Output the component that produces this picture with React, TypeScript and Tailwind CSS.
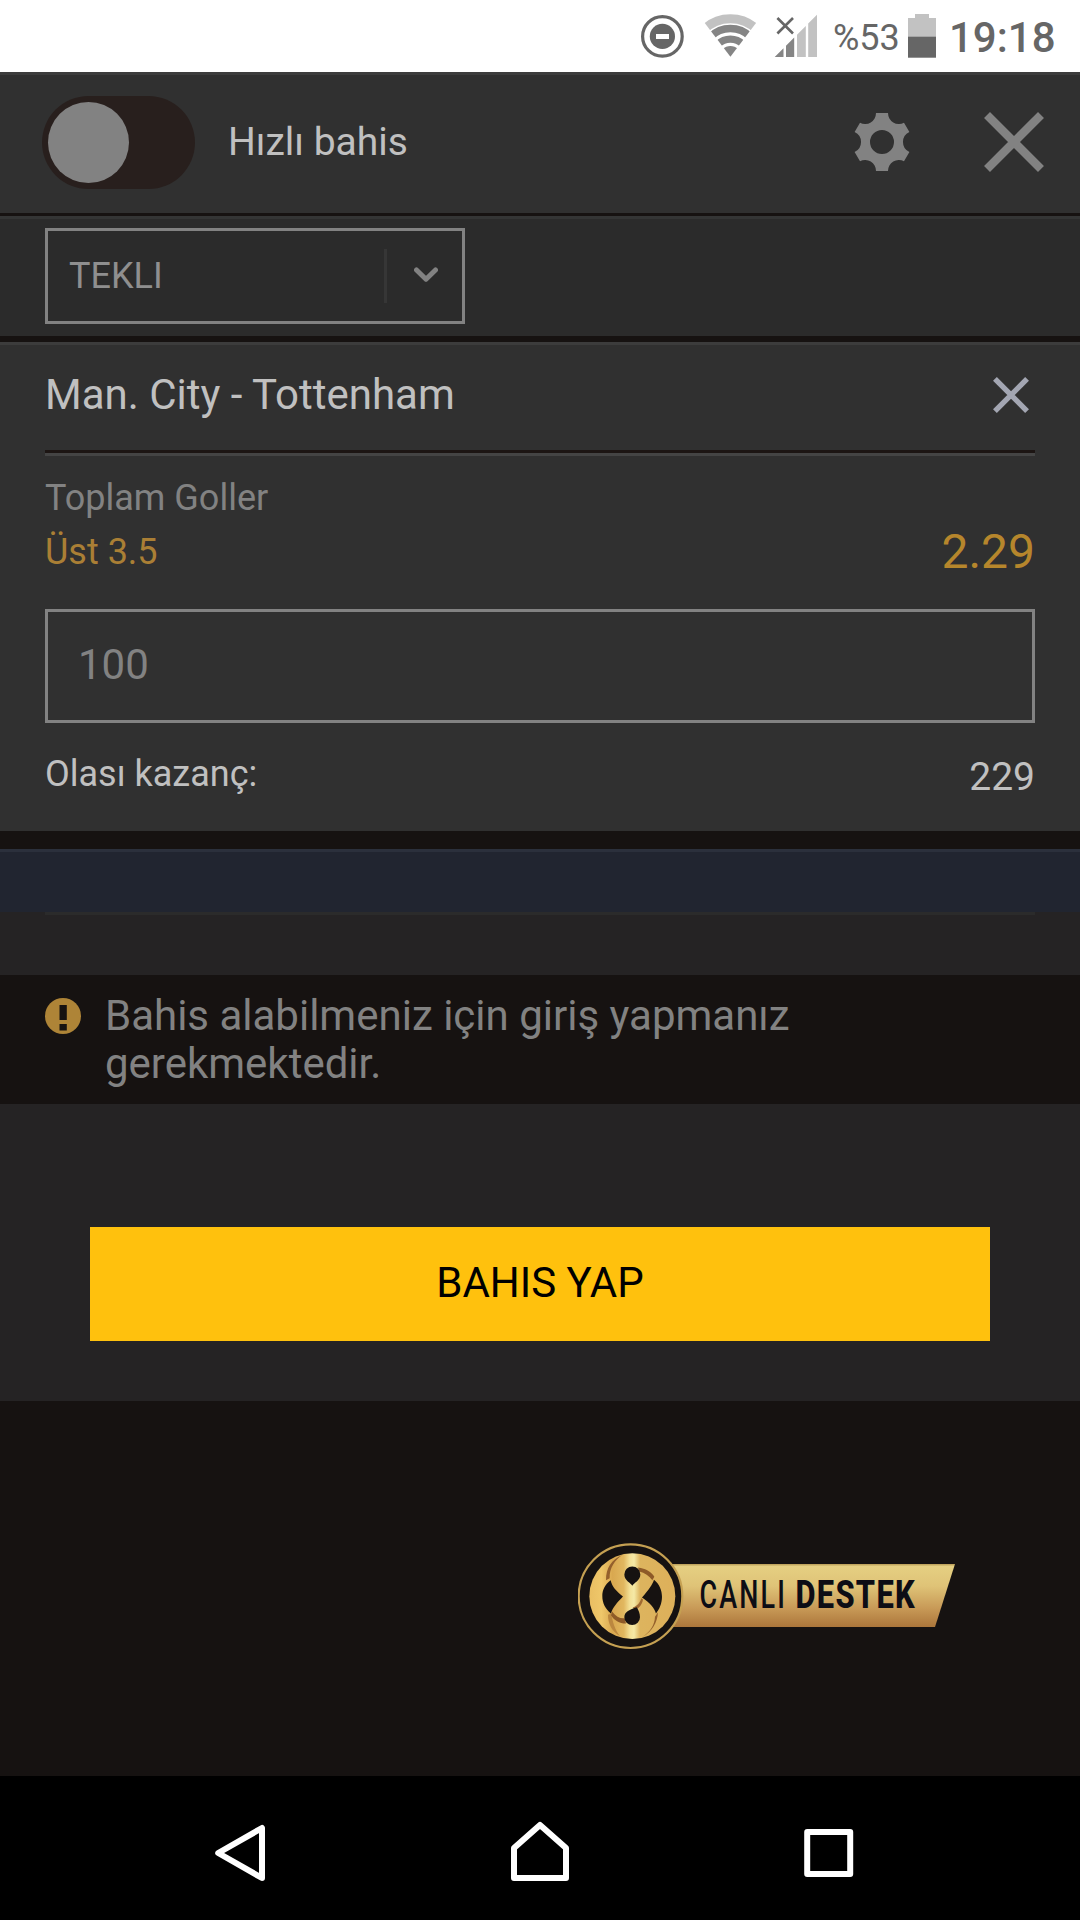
import { useState } from "react";

interface Bet {
  match: string;
  market: string;
  pick: string;
  odds: number;
}

const bet: Bet = {
  match: "Man. City - Tottenham",
  market: "Toplam Goller",
  pick: "Üst 3.5",
  odds: 2.29,
};

function DndIcon() {
  return (
    <svg width="44" height="44" viewBox="0 0 44 44">
      <circle cx="22.4" cy="22.4" r="19.8" fill="none" stroke="#666666" strokeWidth="3.2" />
      <circle cx="22.4" cy="22.4" r="12.6" fill="#666666" />
      <rect x="16" y="20" width="13" height="5" fill="#ffffff" />
    </svg>
  );
}

function WifiIcon() {
  return (
    <svg width="54" height="44" viewBox="0 0 54 44">
      <defs>
        <clipPath id="fan">
          <polygon points="27.4,42.7 -11.8,-8.8 66.6,-8.8" />
        </clipPath>
      </defs>
      <g clipPath="url(#fan)" fill="none">
        <circle cx="27.4" cy="42.7" r="38" stroke="#c2c2c2" strokeWidth="9" />
        <circle cx="27.4" cy="42.7" r="28.2" stroke="#858585" strokeWidth="7.4" />
        <circle cx="27.4" cy="42.7" r="17.6" stroke="#858585" strokeWidth="7.4" />
        <circle cx="27.4" cy="42.7" r="10.8" fill="#858585" />
      </g>
    </svg>
  );
}

function SignalIcon() {
  return (
    <svg width="44" height="44" viewBox="0 0 44 44">
      <path d="M.7 43 9.5 34.2V43Z M12 43V31.7L20.2 23.5V43Z" fill="#858585" />
      <path d="M23 43V20.7L31.8 11.9V43Z M34.2 43V9.5L43 .7V43Z" fill="#c2c2c2" />
      <path d="M3.4 4 19 19.5M19 4 3.4 19.5" stroke="#666666" strokeWidth="2.6" />
    </svg>
  );
}

function BatteryIcon() {
  return (
    <svg width="28" height="44" viewBox="0 0 28 44">
      <path d="M7 0H21V4H28V23H0V4H7Z" fill="#c2c2c2" />
      <rect y="22.7" width="28" height="21" fill="#666666" />
    </svg>
  );
}

function StatusBar() {
  return (
    <div className="flex h-[72px] items-center bg-white pr-6 text-[#666666]">
      <div className="mr-[19px] ml-auto"><DndIcon /></div>
      <div className="mr-[17px]"><WifiIcon /></div>
      <div className="mr-[15px]"><SignalIcon /></div>
      <span className="mr-2 w-[67px] pt-[3px] text-[36px]">%53</span>
      <div className="mr-[13px] pb-px"><BatteryIcon /></div>
      <span className="w-[107px] pt-[4px] text-[42px] font-medium">19:18</span>
    </div>
  );
}

function GearIcon() {
  return (
    <svg width="60" height="60" viewBox="-30 -30 60 60">
      <path
        fillRule="evenodd"
        fill="#828282"
        d="M-6-29H6A11 11 0 0 0 22-19.2L27.4-10A11 11 0 0 0 27.4 10L22 19.2A11 11 0 0 0 6 29H-6A11 11 0 0 0-22 19.2L-27.4 10A11 11 0 0 0-27.4-10L-22-19.2A11 11 0 0 0-6-29ZM0-12A12 12 0 1 0 0 12A12 12 0 1 0 0-12Z"
      />
    </svg>
  );
}

function CloseIcon({ size, color, stroke }: { size: number; color: string; stroke: number }) {
  const a = stroke * 0.36;
  const b = size - a;
  return (
    <svg width={size} height={size} viewBox={`0 0 ${size} ${size}`}>
      <path d={`M${a} ${a}L${b} ${b}M${b} ${a}L${a} ${b}`} stroke={color} strokeWidth={stroke} />
    </svg>
  );
}

function SupportBadge() {
  return (
    <svg className="block" width="380" height="108" viewBox="0 0 380 108">
      <defs>
        <linearGradient id="band" x1="0" y1="0" x2="0" y2="1">
          <stop offset="0" stopColor="#b79a55" />
          <stop offset=".04" stopColor="#e5cf82" />
          <stop offset=".35" stopColor="#dfc377" />
          <stop offset=".7" stopColor="#c89a57" />
          <stop offset="1" stopColor="#ac763b" />
        </linearGradient>
        <linearGradient id="gold" gradientUnits="userSpaceOnUse" x1="58" y1="0" x2="316" y2="0">
          <stop offset="0" stopColor="#e9be62" />
          <stop offset=".14" stopColor="#efc76a" />
          <stop offset=".27" stopColor="#d9a850" />
          <stop offset=".4" stopColor="#e1b75f" />
          <stop offset=".47" stopColor="#f3e096" />
          <stop offset=".52" stopColor="#f5e9a6" />
          <stop offset=".59" stopColor="#ddb45e" />
          <stop offset="1" stopColor="#ddb05a" />
        </linearGradient>
      </defs>
      <polygon points="80,21 377,21 357,84 80,84" fill="url(#band)" />
      <circle cx="52.5" cy="53.2" r="51.8" fill="#161211" stroke="#c5a052" strokeWidth="2.2" />
      {/* Interlaced ribbon emblem */}
      <g transform="translate(-8 -8.2) scale(.3333)">
        <circle cx="187" cy="184" r="129" fill="url(#gold)" />
        <path d="M158 60C124 74 108 100 108 136L119 130C118 100 134 76 158 60Z" fill="#94602c" />
        <path d="M218 306C246 290 262 264 264 232L255 246C254 270 242 290 218 306Z" fill="#94602c" />
        <path d="M114 240C114 268 126 290 150 304C134 284 128 262 124 236Z" fill="#bb873f" />
        <path d="M122 136C104 149 97 166 97 184C97 204 106 222 123 236C128 217 142 203 159 185C138 168 126 155 122 136Z" fill="#161211" />
        <path d="M252 135C268 148 276 167 276 186C276 206 268 224 258 236C254 219 240 205 216 188C237 165 247 150 252 135Z" fill="#161211" />
        <path d="M204 98C227 101 245 111 253 126L247 136C238 124 224 114 208 110Z" fill="#8e5a28" />
        <path d="M126 230C138 246 152 252 164 250L168 266C148 266 132 256 123 241Z" fill="#8e5a28" />
        <path d="M214 190C210 204 200 214 188 218L196 226C208 219 217 208 219 194Z" fill="#a06a31" />
        <path d="M187 153C183 144 163 138 163 119A24 24 0 0 1 211 119C211 138 191 144 187 153Z" fill="#161211" />
        <path d="M200 217C206 226 210 236 210 247A23.5 23.5 0 1 1 163 247C163 230 180 224 200 217Z" fill="#161211" />
      </g>
      <g fill="#0d0d15" fontFamily="Roboto, sans-serif" fontSize="38.5">
        <text transform="translate(121.5 64.8) scale(.7 1)" textLength="122" fontWeight="500">CANLI</text>
        <text transform="translate(217.5 64.8) scale(.8 1)" textLength="149" fontWeight="800">DESTEK</text>
      </g>
    </svg>
  );
}

function NavBar() {
  return (
    <div className="flex h-36 items-center bg-black pt-1.5 pl-[214px]">
      <svg className="mr-[246px]" width="51" height="62" viewBox="0 0 51 62" fill="none" stroke="#ffffff" strokeWidth="6" strokeLinejoin="round">
        <path d="M48 8V58L4.2 33Z" />
      </svg>
      <svg className="mr-[235px]" width="58" height="62" viewBox="0 0 58 62" fill="none" stroke="#ffffff" strokeWidth="6" strokeLinejoin="round">
        <path d="M29 5 55 28V58H3V28Z" />
      </svg>
      <svg width="50" height="62" viewBox="0 0 50 62" fill="none" stroke="#ffffff" strokeWidth="6" strokeLinejoin="round">
        <path d="M3.2 12H46.2V54H3.2Z" />
      </svg>
    </div>
  );
}

export default function App() {
  const [quickBet, setQuickBet] = useState(false);
  const [stake, setStake] = useState("100");

  const winnings = Math.round(Number(stake) * bet.odds);

  return (
    <div className="flex h-[1920px] w-[1080px] flex-col overflow-hidden bg-[#161211] font-['Roboto',sans-serif] leading-none">
      <StatusBar />

      {/* Header */}
      <header className="flex h-[141px] items-center border-t-[3px] border-[#3c3c3c] bg-[#303030] pr-9 pb-[3px] pl-[42px]">
        <button
          onClick={() => setQuickBet((prev) => !prev)}
          className={`flex h-[93px] w-[153px] items-center rounded-full bg-[#281f1d] px-1.5 ${quickBet ? "justify-end" : ""}`}
        >
          <span className="size-[81px] rounded-full bg-[#828282]" />
        </button>
        <span className="ml-[33px] text-[39px] text-[#c0c0c0]">Hızlı bahis</span>
        <button className="mr-[72px] ml-auto pb-[2px]"><GearIcon /></button>
        <button className="pb-[2px]"><CloseIcon size={60} color="#828282" stroke={8.4} /></button>
      </header>

      {/* Bet type */}
      <div className="mt-[3px] h-[120px] border-t-[3px] border-[#343535] bg-[#2b2b2b] px-[45px] pt-[9px]">
        <div className="flex h-24 w-[420px] items-center border-[3px] border-[#828282] pl-[21px] text-[36px] text-[#8f8f8f]">
          <span>TEKLI</span>
          <span className="ml-auto h-[54px] w-[3px] bg-[#363636]" />
          <svg className="mr-6 mb-[2px] ml-[27px]" width="24" height="16" viewBox="0 0 24 16" fill="none" stroke="#828282" strokeWidth="5" strokeLinecap="round" strokeLinejoin="round">
            <path d="M2.5 3 12 12.2 21.5 3" />
          </svg>
        </div>
      </div>

      {/* Selected bet */}
      <section className="mt-1.5 h-[489px] border-t-[3px] border-[#3c3c3c] bg-[#303030] px-[45px] text-[#c0c0c0]">
        <div className="flex h-[108px] items-center justify-between border-b-[3px] border-[#1c1513] pr-1.5 pb-[5px]">
          <h2 className="text-[42px]">{bet.match}</h2>
          <button><CloseIcon size={36} color="#a3a6b2" stroke={5.4} /></button>
        </div>
        <div className="border-t-[3px] border-[#444444] pt-[15px]">
          <p className="text-[36px] leading-[54px] text-[#828282]">{bet.market}</p>
          <div className="flex h-[54px] items-center justify-between">
            <span className="text-[36px] text-[#aa7f35]">{bet.pick}</span>
            <span className="text-[48px] text-[#b6862c]">{bet.odds}</span>
          </div>
        </div>
        <input
          value={stake}
          onChange={(e) => setStake(e.target.value)}
          className="mt-[30px] block h-[114px] w-full border-[3px] border-[#828282] px-[30px] pb-1 text-[42px] text-[#828282] outline-none"
        />
        <div className="mt-6 flex h-[54px] items-center justify-between">
          <span className="text-[36px]">Olası kazanç:</span>
          <span className="pt-[6px] text-[39px]">{winnings}</span>
        </div>
      </section>

      {/* Summary strip */}
      <div className="mt-[18px] h-[63px] border-t-[3px] border-[#2b303c] bg-[#212530]" />
      <div className="h-[63px] bg-[#252324] px-[45px]">
        <div className="h-[3px] bg-[#2b2b2b]" />
      </div>

      <div className="flex h-[129px] pt-[17px] pl-[45px]">
        <svg className="mt-[6px] mr-6" width="36" height="36" viewBox="0 0 36 36">
          <circle cx="18" cy="18" r="18" fill="#ae8437" />
          <path d="M14.5 7H21.8V22H14.5ZM14.5 26H21.8V32.5H14.5Z" fill="#161211" />
        </svg>
        <p className="w-[800px] text-[42px] leading-[48px] text-[#828282]">
          Bahis alabilmeniz için giriş yapmanız gerekmektedir.
        </p>
      </div>

      <div className="h-[297px] bg-[#252324] px-[90px] pt-[123px]">
        <button className="h-[114px] w-full bg-[#ffc10d] pb-[3px] text-[42px] text-black">BAHIS YAP</button>
      </div>

      <div className="flex flex-1 items-start pt-[142px] pl-[578px]">
        <SupportBadge />
      </div>

      <NavBar />
    </div>
  );
}
